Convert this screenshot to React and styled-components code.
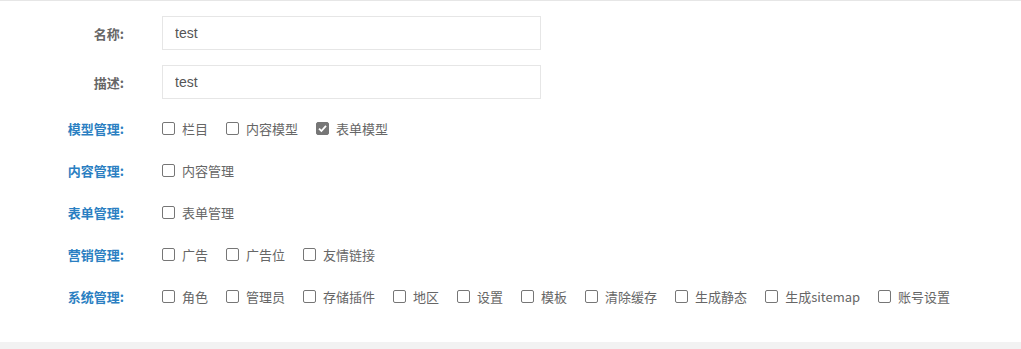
import styled, { createGlobalStyle } from "styled-components";

const GlobalStyle = createGlobalStyle`
  html, body {
    margin: 0;
    padding: 0;
    background: #f2f2f2;
  }
  body {
    font-family: "Liberation Sans", "Noto Sans CJK SC", sans-serif;
  }
`;

const Card = styled.div`
  background: #fff;
  border-top: 1px solid #e6e6e6;
  height: 342px;
  padding-top: 15px;
  box-sizing: border-box;
`;

const Row = styled.div`
  display: flex;
  align-items: center;
  height: ${(props) => (props.$input ? "34px" : "42px")};
  margin-bottom: ${(props) => (props.$input ? "15px" : "0")};
  &:nth-child(2) {
    margin-bottom: 8px;
  }
`;

const Label = styled.div`
  width: 124px;
  flex-shrink: 0;
  text-align: right;
  font-family: "Noto Sans CJK SC", sans-serif;
  font-size: 13px;
  font-weight: bold;
  color: ${(props) => (props.$blue ? "#2b7fc2" : "#666")};
  margin-right: 38px;
`;

const TextInput = styled.input`
  width: 379px;
  height: 34px;
  box-sizing: border-box;
  border: 1px solid #e6e6e6;
  padding: 0 12px;
  font-family: "Liberation Sans", sans-serif;
  font-size: 14px;
  color: #555;
  outline: none;
`;

const Options = styled.div`
  display: flex;
  align-items: center;
`;

const Option = styled.label`
  display: flex;
  align-items: center;
  margin-right: 18px;
  font-family: "Noto Sans CJK SC", sans-serif;
  font-size: 13px;
  color: #666;
  cursor: pointer;
`;

const Box = styled.span`
  width: 13px;
  height: 13px;
  box-sizing: border-box;
  border: 1px solid #767676;
  border-radius: 2px;
  background: ${(props) => (props.$checked ? "#767676" : "#fff")};
  margin-right: 7px;
  display: flex;
  align-items: center;
  justify-content: center;
`;

const Check = () => (
  <svg width="11" height="11" viewBox="0 0 11 11">
    <path d="M2 5.6 L4.4 8 L9 2.8" fill="none" stroke="#fff" strokeWidth="1.8" />
  </svg>
);

const groups = [
  { name: "模型管理", items: ["栏目", "内容模型", "表单模型"], checked: ["表单模型"] },
  { name: "内容管理", items: ["内容管理"] },
  { name: "表单管理", items: ["表单管理"] },
  { name: "营销管理", items: ["广告", "广告位", "友情链接"] },
  {
    name: "系统管理",
    items: ["角色", "管理员", "存储插件", "地区", "设置", "模板", "清除缓存", "生成静态", "生成sitemap", "账号设置"],
  },
];

const App = () => {
  return (
    <>
      <GlobalStyle />
      <Card>
        <Row $input>
          <Label>名称:</Label>
          <TextInput defaultValue="test" />
        </Row>
        <Row $input>
          <Label>描述:</Label>
          <TextInput defaultValue="test" />
        </Row>
        {groups.map((g) => (
          <Row key={g.name}>
            <Label $blue>{g.name}:</Label>
            <Options>
              {g.items.map((item) => {
                const on = (g.checked || []).includes(item);
                return (
                  <Option key={item}>
                    <Box $checked={on}>{on && <Check />}</Box>
                    {item}
                  </Option>
                );
              })}
            </Options>
          </Row>
        ))}
      </Card>
    </>
  );
};

export default App;
